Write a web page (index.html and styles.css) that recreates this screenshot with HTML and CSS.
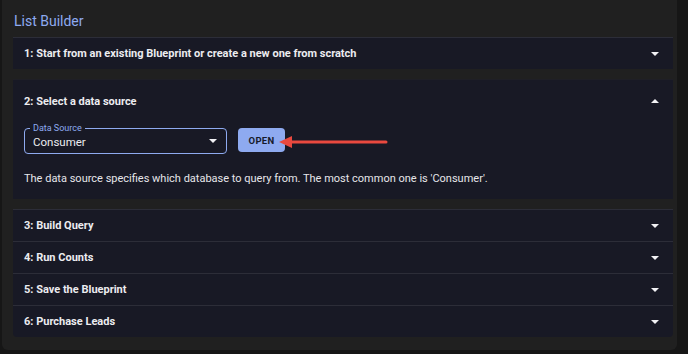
FILE: index.html
```html
<!DOCTYPE html>
<html lang="en">
<head>
  <meta charset="UTF-8">
  <title>List Builder</title>
  <link rel="stylesheet" href="styles.css">
</head>
<body>
  <div class="paper">
    <h2 class="title">List Builder</h2>

    <div class="accordion">
      <div class="item">
        <div class="summary">
          <span>1: Start from an existing Blueprint or create a new one from scratch</span>
          <svg class="caret" viewBox="0 0 10 5"><path d="M0 0h10L5 5z"/></svg>
        </div>
      </div>

      <div class="item open">
        <div class="summary">
          <span>2: Select a data source</span>
          <svg class="caret" viewBox="0 0 10 5"><path d="M0 5h10L5 0z"/></svg>
        </div>
        <div class="details">
          <div class="source-row">
            <div class="select">
              <span class="select-label">Data Source</span>
              <span class="select-value">Consumer</span>
              <svg class="caret" viewBox="0 0 10 5"><path d="M0 0h10L5 5z"/></svg>
            </div>
            <button class="open-btn">OPEN</button>
            <svg class="pointer" viewBox="0 0 110 14">
              <path d="M108 7H12" stroke="#e9493f" stroke-width="3" stroke-linecap="round"/>
              <path d="M1 7l13-6v12z" fill="#e9493f"/>
            </svg>
          </div>
          <p class="hint">The data source specifies which database to query from. The most common one is 'Consumer'.</p>
        </div>
      </div>

      <div class="item">
        <div class="summary">
          <span>3: Build Query</span>
          <svg class="caret" viewBox="0 0 10 5"><path d="M0 0h10L5 5z"/></svg>
        </div>
      </div>
      <div class="item">
        <div class="summary">
          <span>4: Run Counts</span>
          <svg class="caret" viewBox="0 0 10 5"><path d="M0 0h10L5 5z"/></svg>
        </div>
      </div>
      <div class="item">
        <div class="summary">
          <span>5: Save the Blueprint</span>
          <svg class="caret" viewBox="0 0 10 5"><path d="M0 0h10L5 5z"/></svg>
        </div>
      </div>
      <div class="item last">
        <div class="summary">
          <span>6: Purchase Leads</span>
          <svg class="caret" viewBox="0 0 10 5"><path d="M0 0h10L5 5z"/></svg>
        </div>
      </div>
    </div>
  </div>
</body>
</html>
```

FILE: styles.css
```css
body {
  margin: 0;
  background: #161616;
  font-family: Roboto, 'Liberation Sans', sans-serif;
  color: #ececf0;
}

.paper {
  background: #202020;
  margin: 0 11px 0 2px;
  height: 350px;
  border-radius: 0 0 6px 6px;
  padding: 0 4px 0 11px;
  box-sizing: border-box;
}

.title {
  margin: 0;
  padding: 13px 0 0 1px;
  height: 37px;
  box-sizing: border-box;
  font-size: 14px;
  line-height: 17px;
  font-weight: 400;
  color: #8eaaf0;
}

.accordion {
  width: 660px;
}

.item {
  background: #181925;
  border-top: 1px solid #2c2d38;
}

.item.open {
  margin: 10px 0;
  border-top-color: #1f1f26;
}

.item.last {
  border-radius: 0 0 4px 4px;
}

.summary {
  display: flex;
  align-items: center;
  justify-content: space-between;
  height: 31px;
  padding: 0 14px 0 11px;
  box-sizing: border-box;
  font-size: 11px;
  font-weight: 700;
}

.item.open .summary {
  height: 41px;
  padding-top: 1px;
}

.caret {
  width: 8px;
  height: 4px;
  fill: #f2f2f5;
}

.details {
  padding: 7px 11px 14px;
}

.source-row {
  display: flex;
  align-items: center;
  gap: 11px;
}

.select {
  position: relative;
  width: 184px;
  height: 24px;
  border: 1.5px solid #8eaaf0;
  border-radius: 4px;
  display: flex;
  align-items: center;
  justify-content: space-between;
  padding: 0 9px 0 8px;
  box-sizing: content-box;
}

.select-label {
  position: absolute;
  top: -6px;
  left: 5px;
  padding: 0 3px;
  background: #181925;
  font-size: 9px;
  line-height: 10px;
  color: #8eaaf0;
}

.select-value {
  font-size: 11.5px;
  margin-top: 1px;
}

.open-btn {
  width: 47px;
  height: 24px;
  border: none;
  border-radius: 4px;
  background: #8eaaf0;
  color: #171a2b;
  font-family: inherit;
  font-size: 9.5px;
  font-weight: 700;
  letter-spacing: 0.3px;
  padding: 0;
  margin-top: -2px;
}

.pointer {
  width: 110px;
  height: 14px;
  margin-left: -18px;
  margin-top: 1px;
}

.hint {
  margin: 18px 0 0;
  font-size: 11px;
  color: #e6e6ea;
}
```
